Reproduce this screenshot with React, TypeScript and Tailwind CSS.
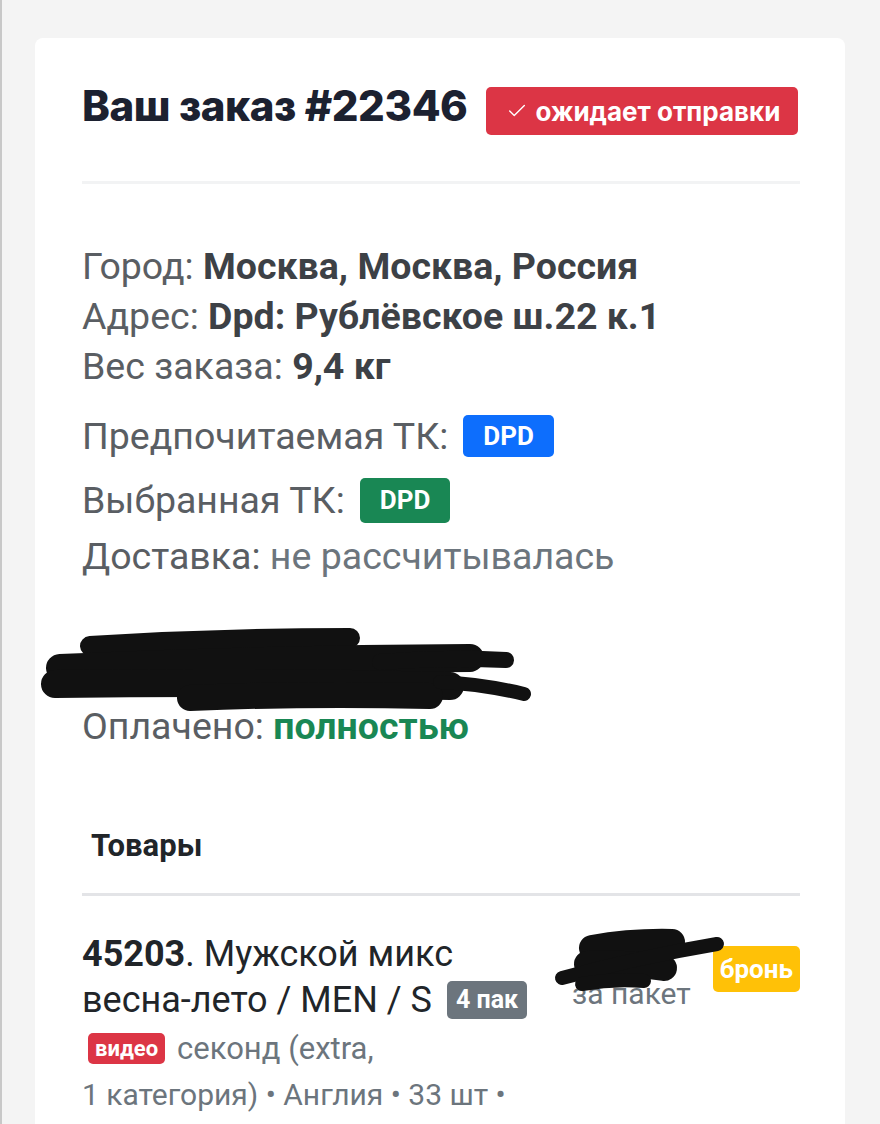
import { Check } from "lucide-react";

const body = { fontFamily: "Roboto, 'Noto Sans', sans-serif" };
const head = { fontFamily: "Inter, Roboto, sans-serif" };

function Scribble({ className, lines, w, h }: { className: string; lines: [number, number, number, number, number][]; w: number; h: number }) {
  return (
    <svg className={className} width={w} height={h} viewBox={`0 0 ${w} ${h}`}>
      {lines.map(([x1, y1, x2, y2, sw], i) => (
        <path key={i} d={`M${x1} ${y1} Q${(x1 + x2) / 2} ${(y1 + y2) / 2 - 4} ${x2} ${y2}`} stroke="#111" strokeWidth={sw} strokeLinecap="round" fill="none" />
      ))}
    </svg>
  );
}

function Info({ label, value }: { label: string; value: string }) {
  return (
    <p>
      {label}: <b className="font-bold text-[#3d4146]">{value}</b>
    </p>
  );
}

export default function App() {
  return (
    <div className="min-h-[1124px] border-l-2 border-[#c8c8c8] bg-[#f4f4f4] pl-[33px] pr-[35px] pt-[38px]" style={body}>
      <div className="h-[1086px] overflow-hidden rounded-t-lg bg-white pl-[47px] pr-[45px]">
        <div className="flex items-center gap-[18px] whitespace-nowrap pt-[49px] pb-[46px]">
          <h1 className="relative top-[-5px] shrink-0 text-[42px] leading-[48px] font-extrabold tracking-[-0.01em] text-[#1c2130]" style={head}>Ваш заказ #22346</h1>
          <span className="flex h-[48px] shrink-0 items-center gap-2 rounded-[5px] bg-[#dc3545] pl-[20px] pr-[18px] text-[26px] font-bold text-white" style={head}>
            <Check className="h-[22px] w-[22px]" strokeWidth={1.5} />
            ожидает отправки
          </span>
        </div>
        <div className="h-[3px] bg-[#f2f3f4]" />

        <div className="pt-[57px] text-[37.5px] leading-[50px] text-[#5a5e63]">
          <Info label="Город" value="Москва, Москва, Россия" />
          <Info label="Адрес" value="Dpd: Рублёвское ш.22 к.1" />
          <Info label="Вес заказа" value="9,4 кг" />
          <p className="mt-[20px] flex items-center gap-[15px]">
            Предпочитаемая ТК:
            <span className="flex h-[42px] items-center rounded-[5px] bg-[#0d6efd] px-[20px] text-[26px] font-bold text-white">DPD</span>
          </p>
          <p className="mt-[14px] flex items-center gap-[15px]">
            Выбранная ТК:
            <span className="flex h-[45px] items-center rounded-[5px] bg-[#198754] px-[20px] text-[26px] font-bold text-white">DPD</span>
          </p>
          <p className="mt-[6px]">Доставка: <span className="text-[#6c757d]">не рассчитывалась</span></p>
          <div className="relative mt-[20px] h-[100px]">
            <Scribble
              className="absolute left-[-42px] top-[25px]"
              w={500}
              h={100}
              lines={[
                [50, 20, 310, 12, 20],
                [20, 42, 430, 32, 28],
                [15, 58, 410, 60, 28],
                [150, 72, 390, 70, 26],
                [340, 36, 466, 34, 16],
                [400, 56, 484, 68, 14],
              ]}
            />
          </div>
          <p>
            Оплачено: <b className="font-bold text-[#198754]">полностью</b>
          </p>
        </div>

        <h2 className="mt-[72px] pl-[9px] text-[31px] font-bold text-[#212529]">Товары</h2>
        <div className="mt-[23px] h-[3px] bg-[#e3e4e7]" />

        <div className="flex gap-[20px] pt-[35px]">
          <div className="w-[470px] text-[#212529]">
            <p className="text-[36px] leading-[46px]">
              <b className="font-bold">45203</b>. Мужской микс <span className="whitespace-nowrap">весна-лето</span> / MEN / S{" "}
              <span className="relative top-[-4px] ml-[6px] inline-block rounded-[5px] bg-[#6c757d] px-[9px] text-[25px] font-bold leading-[38px] text-white">4 пак</span>
            </p>
            <p className="mt-[7px] text-[31px] leading-[38px] text-[#6c757d]">
              <span className="relative top-[-3px] ml-[6px] mr-[12px] inline-block rounded-[5px] bg-[#dc3545] px-[7px] text-[22px] font-bold leading-[31px] text-white">видео</span>
              секонд (extra,
            </p>
            <p className="mt-[8px] text-[30px] leading-[38px] text-[#6c757d]">1 категория) • Англия • 33 шт •</p>
          </div>
          <div className="relative flex flex-1 justify-between">
            <div className="pt-[46px] text-[30px] leading-[34px] text-[#6c757d]">за пакет</div>
            <span className="mt-[15px] h-[46px] self-start rounded-[5px] bg-[#ffc107] px-[7px] text-[26px] font-bold leading-[46px] text-white">бронь</span>
            <Scribble
              className="absolute left-[-20px] top-[-5px]"
              w={175}
              h={70}
              lines={[
                [40, 22, 120, 16, 26],
                [35, 38, 112, 42, 26],
                [10, 52, 165, 18, 14],
                [30, 58, 92, 55, 14],
              ]}
            />
          </div>
        </div>
      </div>
    </div>
  );
}
